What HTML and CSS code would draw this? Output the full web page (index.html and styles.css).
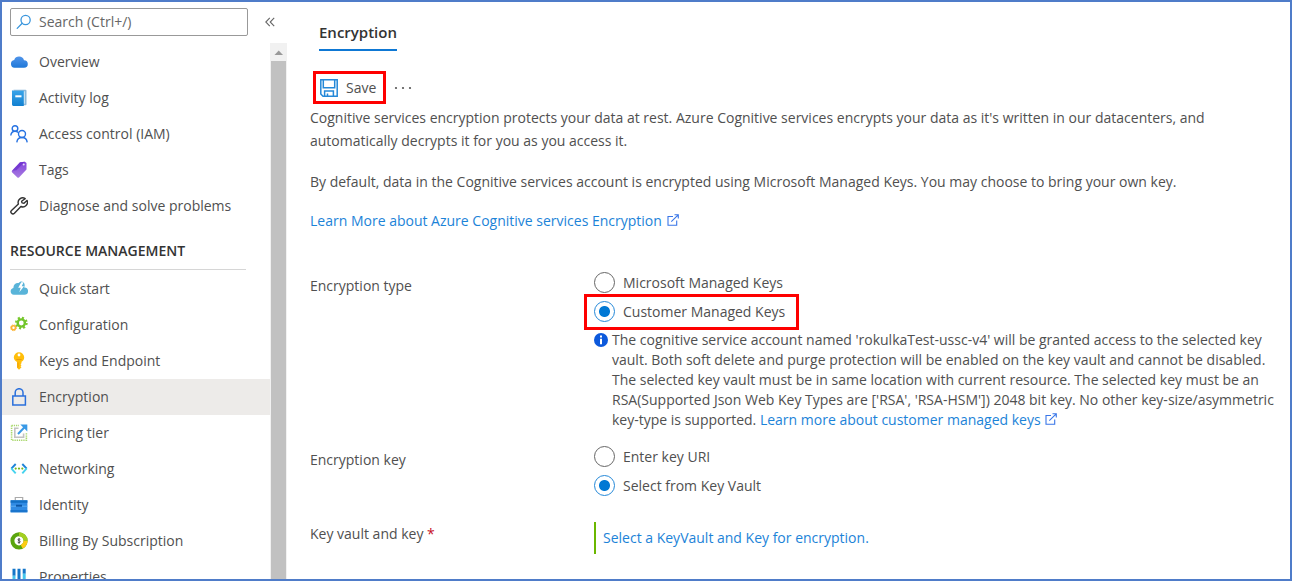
FILE: index.html
```html
<!DOCTYPE html>
<html lang="en">
<head>
<meta charset="utf-8">
<title>Encryption</title>
<link rel="stylesheet" href="styles.css">
</head>
<body>
<div class="frame">
  <aside class="sidebar">
    <div class="search-row">
      <div class="search">
        <svg class="search-icon" viewBox="0 0 16 16" width="16" height="16" fill="none" stroke="#3a96dd" stroke-width="1.3" stroke-linecap="round"><circle cx="9.6" cy="6" r="4.6"/><path d="M6.2 9.3 1.2 14.4"/></svg>
        <input type="text" aria-label="Search" placeholder="Search (Ctrl+/)">
      </div>
      <button class="collapse" type="button" aria-label="Collapse menu"><svg viewBox="0 0 10 10" width="10" height="10" fill="none" stroke="#666" stroke-width="1.1"><path d="M4.8.8.8 5l4 4.2M9.2.8l-4 4.2 4 4.2"/></svg></button>
    </div>
    <div class="menu">
      <nav class="nav">
        <a class="item" href="#"><svg viewBox="0 0 18 18" width="18" height="18"><defs><linearGradient id="cl" x2="0" y2="1"><stop stop-color="#5094ea"/><stop offset="1" stop-color="#1f78d8"/></linearGradient></defs><path d="M4.500 14.800a4 4 0 0 1-.3-7.900A5.200 5.200 0 0 1 14 7.200a3.800 3.800 0 0 1 0 7.600z" fill="url(#cl)"/></svg>Overview</a>
        <a class="item" href="#"><svg viewBox="0 0 18 18" width="18" height="18"><defs><linearGradient id="bk" x2="0" y2="1"><stop stop-color="#38a4ea"/><stop offset="1" stop-color="#1280d0"/></linearGradient></defs><path d="M3.500.8h12a1 1 0 0 1 1 1v13.500a1 1 0 0 1-1 1h-12z" fill="#8cb9da"/><path d="M4.600 2.300h10.200v12.400H4.600z" fill="#d5ebf8"/><path d="M3.400 1.800h10.400V17H3.400A1.400 1.400 0 0 1 2 15.600V2.600a.8.8 0 0 1 1.400-.8z" fill="url(#bk)"/><path d="M5.300 6.300h6.200v2H5.300z" fill="#fff"/></svg>Activity log</a>
        <a class="item" href="#"><svg viewBox="0 0 18 18" width="18" height="18" fill="none" stroke="#2672e2" stroke-width="1.4"><circle cx="5" cy="3.500" r="2.800"/><path d="M.8 10.500c.3-2.600 1.900-4.200 4.200-4.200 1.300 0 2.300.4 3 1.200"/><circle cx="12" cy="9" r="3.500"/><path d="M6.800 17.300c.4-3 2.400-4.800 5.200-4.800s4.800 1.800 5.200 4.800"/></svg>Access control (IAM)</a>
        <a class="item" href="#"><svg viewBox="0 0 18 18" width="18" height="18"><defs><linearGradient id="tg" x2="0" y2="1"><stop stop-color="#8343dc"/><stop offset="1" stop-color="#a77be0"/></linearGradient></defs><path d="M10 1.200 14.900.7 16.500 2v6.400l-7.500 8q-.8.800-1.600 0L2 11.200q-.6-.8 0-1.500z" fill="url(#tg)"/><path d="m10 1.200 4.900-.5-8.500 8.600L2 9.700z" fill="#6428c9" opacity=".6"/><circle cx="13.700" cy="3.500" r="1" fill="#e8dcfa"/></svg>Tags</a>
        <a class="item" href="#"><svg viewBox="0 0 18 18" width="18" height="18" fill="none" stroke="#333" stroke-width="1.4" stroke-linejoin="round"><path d="M15.200 1.600A4.600 4.600 0 0 0 8.400 7L1.500 13.400a1.900 1.900 0 0 0 2.900 2.900L10.900 9.500A4.600 4.600 0 0 0 17 3.400l-3 2.800-2-.3-.4-1.700z"/></svg>Diagnose and solve problems</a>
        <h2 class="group">RESOURCE MANAGEMENT</h2>
        <a class="item" href="#"><svg viewBox="0 0 18 18" width="18" height="18"><path d="M3.800 14.800a3.500 3.500 0 0 1-.4-6.900C3.300 4.500 6 2.600 8.600 3.100 10 .8 13.500 1 14.300 3.500c.6 1.400.4 2.700-.1 3.900a3.700 3.700 0 0 1 .3 7.400z" fill="#59b4d9"/><path d="m11.200 2.300-3 5.500h2.500l-1.400 4.500 4.700-6h-2.300l1.900-4z" fill="#fff"/></svg>Quick start</a>
        <a class="item" href="#"><svg viewBox="0 0 18 18" width="18" height="18" fill="none"><circle cx="11.300" cy="7" r="5.200" stroke="#7aca2c" stroke-width="2.400" stroke-dasharray="2 2.084"/><circle cx="11.300" cy="7" r="3.600" stroke="#72c52c" stroke-width="2.400"/><circle cx="3.500" cy="11.800" r="2" stroke="#fcb334" stroke-width="1.600"/><circle cx="3.500" cy="11.800" r="2.900" stroke="#fcb334" stroke-width="1" stroke-dasharray="1.200 1.078"/></svg>Configuration</a>
        <a class="item" href="#"><svg viewBox="0 0 18 18" width="18" height="18"><path d="M9 .2a5.200 5.200 0 0 1 5.200 5.100c0 2.200-1 3.500-2.700 4.500v1.400l-1 1 1 1-1 1 1 1L9 17.800l-2-2V9.900C5 9 3.800 7.500 3.800 5.300A5.200 5.200 0 0 1 9 .2z" fill="#ffbe0a"/><circle cx="9" cy="3" r="1.400" fill="#fff"/><path d="M7.600 10.500h.8v5h-.8zM6.300 7.200h5.400v.8H6.300z" fill="#e8930c"/></svg>Keys and Endpoint</a>
        <a class="item selected" href="#" aria-current="page"><svg viewBox="0 0 18 18" width="18" height="18" fill="none" stroke="#2b70dc" stroke-width="1.500"><path d="M2.800 8h12.600v9H2.800zM5.200 8V4.600a3.900 3.900 0 0 1 7.800 0V8"/></svg>Encryption</a>
        <a class="item" href="#"><svg viewBox="0 0 18 18" width="18" height="18" fill="none"><path d="M1.600 1.500v14.700h14.800V9M1.600 1.500H9" stroke="#a9d76c" stroke-width="1.600" stroke-dasharray="1.300 .9"/><path d="M8.500 4.300H4.800v8.900h8.800V9.500" stroke="#c2c2c2" stroke-width="1.600"/><path d="m8 10 6.500-6.800" stroke="#3999e6" stroke-width="2"/><path d="M10.300.4h7v7z" fill="#3999e6"/></svg>Pricing tier</a>
        <a class="item" href="#"><svg viewBox="0 0 18 18" width="18" height="18" fill="none" stroke-width="1.900"><path d="M5.700 4 1.300 8.700M12.300 4l4.400 4.700" stroke="#1e83d8"/><path d="m1.300 8.300 4.400 5M16.700 8.300l-4.400 5" stroke="#46d3ee"/><g fill="#78b91f" stroke="none"><circle cx="5.700" cy="8.600" r="1.100"/><circle cx="9" cy="8.600" r="1.100"/><circle cx="12.300" cy="8.600" r="1.100"/></g></svg>Networking</a>
        <a class="item" href="#"><svg viewBox="0 0 18 18" width="18" height="18"><path d="M5.300 4.500V1.500h7.400v3" fill="none" stroke="#aaa" stroke-width="1.200"/><path d="M.6 4.300h16.800v12H.6z" fill="#308be4"/><path d="M.6 4.300h16.800v2.500H.6z" fill="#1370c5"/><path d="M.6 9.800h16.800v.8H.6z" fill="#67b5f5"/><path d="M6 8.700h6v2H6z" fill="#0b55a5"/><path d="M.6 14h16.800v2.300H.6z" fill="#1a75cd"/></svg>Identity</a>
        <a class="item" href="#"><svg viewBox="0 0 18 18" width="18" height="18"><circle cx="9" cy="8.800" r="6.600" fill="#fff" stroke="#5aa50e" stroke-width="4"/><path d="M9 2.200a6.600 6.600 0 0 1 6.600 6.600" fill="none" stroke="#a4cf20" stroke-width="4"/><path d="M15.600 8.800a6.600 6.600 0 0 1-3.900 6" fill="none" stroke="#fdcc14" stroke-width="4"/><path d="M10.300 7.500c-.6-.7-2.400-.6-2.400.3s2.400.9 2.400 2-1.900 1-2.600.3M9 6v5.800" fill="none" stroke="#333" stroke-width=".8"/></svg>Billing By Subscription</a>
        <a class="item" href="#"><svg viewBox="0 0 18 18" width="18" height="18"><path d="M2.500.8h3v7h-3zM7.500.8h3v12h-3zM12.700.8h3v5h-3z" fill="#1476c9"/><path d="M2.500 7.800h3v9.200h-3zM7.500 12.800h3V17h-3zM12.700 5.800h3V17h-3z" fill="#45c6ed"/></svg>Properties</a>
      </nav>
      <div class="scrollbar" aria-hidden="true"><svg viewBox="0 0 17 18" width="17" height="18"><path d="M4.500 12h8.500L8.700 7.500z" fill="#999"/></svg><div class="thumb"></div></div>
    </div>
  </aside>

  <main class="main">
    <h1 class="tab">Encryption</h1>
    <div class="toolbar">
      <button class="save" type="button"><svg viewBox="0 0 18 18" width="18" height="18" fill="none" stroke="#2488d8" stroke-width="1.500"><path d="M.8.800h16.400v16.400H3L.8 15zM3.300.8v8h11.400v-8M4.600 17v-5h8.800v5M7.500 17v-2.500"/></svg>Save</button>
      <button class="more" type="button" aria-label="More"><svg viewBox="0 0 18 4" width="18" height="4" fill="#555"><circle cx="2" cy="2" r="1.100"/><circle cx="9" cy="2" r="1.100"/><circle cx="16" cy="2" r="1.100"/></svg></button>
    </div>
    <p class="intro">Cognitive services encryption protects your data at rest. Azure Cognitive services encrypts your data as it's written in our datacenters, and automatically decrypts it for you as you access it.</p>
    <p class="intro">By default, data in the Cognitive services account is encrypted using Microsoft Managed Keys. You may choose to bring your own key.</p>
    <p class="learn"><a href="#">Learn More about Azure Cognitive services Encryption <svg class="ext" viewBox="0 0 12 12" width="12" height="12" fill="none" stroke="#3976e8" stroke-width="1.100"><path d="M6 2.500H1v8.700h8.700V6.500M4.300 7.700l6.900-6.900M7.500.7h3.800v3.800"/></svg></a></p>

    <div class="field" role="radiogroup" aria-labelledby="type-label">
      <div class="label" id="type-label">Encryption type</div>
      <div class="control">
        <label class="radio"><input type="radio" name="type">Microsoft Managed Keys</label>
        <label class="radio marked"><input type="radio" name="type" checked>Customer Managed Keys</label>
        <div class="info">
          <svg viewBox="0 0 14 14" width="14" height="14"><circle cx="7" cy="7" r="7" fill="#0c59dc"/><path d="M6 5.800h2v5.400H6zM6 2.600h2v2H6z" fill="#fff"/></svg>
          <p>The cognitive service account named 'rokulkaTest-ussc-v4' will be granted access to the selected key vault. Both soft delete and purge protection will be enabled on the key vault and cannot be disabled. The selected key vault must be in same location with current resource. The selected key must be an RSA(Supported Json Web Key Types are ['RSA', 'RSA-HSM']) 2048 bit key. No other key-size/asymmetric key-type is supported. <a href="#">Learn more about customer managed keys <svg class="ext" viewBox="0 0 12 12" width="12" height="12" fill="none" stroke="#3976e8" stroke-width="1.100"><path d="M6 2.500H1v8.700h8.700V6.500M4.300 7.700l6.900-6.900M7.500.7h3.800v3.800"/></svg></a></p>
        </div>
      </div>
    </div>

    <div class="field" role="radiogroup" aria-labelledby="key-label">
      <div class="label" id="key-label">Encryption key</div>
      <div class="control">
        <label class="radio"><input type="radio" name="key">Enter key URI</label>
        <label class="radio"><input type="radio" name="key" checked>Select from Key Vault</label>
      </div>
    </div>

    <div class="field">
      <div class="label">Key vault and key <span class="required">*</span></div>
      <div class="control"><a class="picker" href="#">Select a KeyVault and Key for encryption.</a></div>
    </div>
  </main>
</div>
</body>
</html>
```
FILE: styles.css
```css
* { box-sizing: border-box; }
body {
  margin: 0;
  background: #fff;
  color: #505050;
  font: 14px/20px "Open Sans", "Noto Sans", sans-serif;
}
h1, h2, p { margin: 0; }
a { color: #1c83d8; text-decoration: none; }
button { border: 0; background: none; padding: 0; color: inherit; font: inherit; cursor: pointer; }
svg { flex: none; }

.frame {
  display: flex;
  height: 100vh;
  border: 2px solid #4f7cc9;
  overflow: hidden;
}

.sidebar { flex: none; width: 285px; display: flex; flex-direction: column; }
.search-row { display: flex; align-items: center; gap: 17px; padding: 6px 8px 7px; }
.search { position: relative; width: 238px; }
.search input {
  display: block;
  width: 100%;
  height: 28px;
  padding: 0 8px 2px 28px;
  border: 1px solid #999;
  border-radius: 2px;
  color: inherit;
  font: inherit;
}
.search input::placeholder { color: #666; opacity: 1; }
.search-icon { position: absolute; left: 6px; top: 6px; }
.collapse { display: flex; }

.menu { flex: 1; min-height: 0; display: flex; }
.nav { flex: 1; padding-top: 1px; overflow: hidden; }
.item {
  display: flex;
  align-items: center;
  gap: 11px;
  height: 36px;
  padding-left: 8px;
  color: inherit;
}
.selected { background: #edebe9; }
.group {
  height: 46px;
  margin: 0 24px 1px 8px;
  padding-top: 17px;
  border-bottom: 1px solid #d6d6d6;
  color: #333;
  font-size: 14px;
  font-weight: 600;
  line-height: 20px;
}
.scrollbar { width: 17px; display: flex; flex-direction: column; background: #f1f1f1; }
.thumb { flex: 1; margin: 0 1px; background: #c1c1c1; }

.main { flex: 1; min-width: 0; padding: 20px 6px 0 23px; }
.tab {
  width: fit-content;
  margin-left: 9px;
  padding-bottom: 7px;
  border-bottom: 2px solid #0e78d4;
  color: #333;
  font-size: 15px;
  font-weight: 600;
  line-height: 20px;
}
.toolbar { display: flex; align-items: center; gap: 8px; margin: 20px 0 2px 3px; }
.save {
  display: flex;
  align-items: center;
  gap: 8px;
  height: 33px;
  padding: 0 7px 0 4px;
  border: 3px solid #fe0000;
}
.more { display: flex; }
.intro { max-width: 920px; margin-bottom: 18px; line-height: 23px; }
.learn { margin-bottom: 41px; }
.ext { margin-left: 1px; }

.field {
  display: grid;
  grid-template-columns: 284px 1fr;
  margin-bottom: 16px;
}
.label { padding-top: 4px; }
.required { color: #c50f1f; }
.radio {
  position: relative;
  display: flex;
  align-items: center;
  gap: 8px;
  width: fit-content;
  height: 21px;
  margin-bottom: 8px;
}
.radio input {
  appearance: none;
  width: 21px;
  height: 21px;
  margin: 0;
  border: 1px solid #666;
  border-radius: 50%;
}
.radio input:checked {
  border-color: #2488d8;
  background: radial-gradient(circle, #0078d4 0 5px, transparent 6px);
}
.marked::after { content: ""; position: absolute; inset: -7px -14px -8px -10px; border: 3px solid #fe0000; }
.info { display: flex; gap: 4px; }
.info > svg { margin-top: 3px; }
.picker { display: block; width: fit-content; margin-top: 2px; padding: 6px 0 6px 7px; border-left: 2px solid #6bb700; }
```
